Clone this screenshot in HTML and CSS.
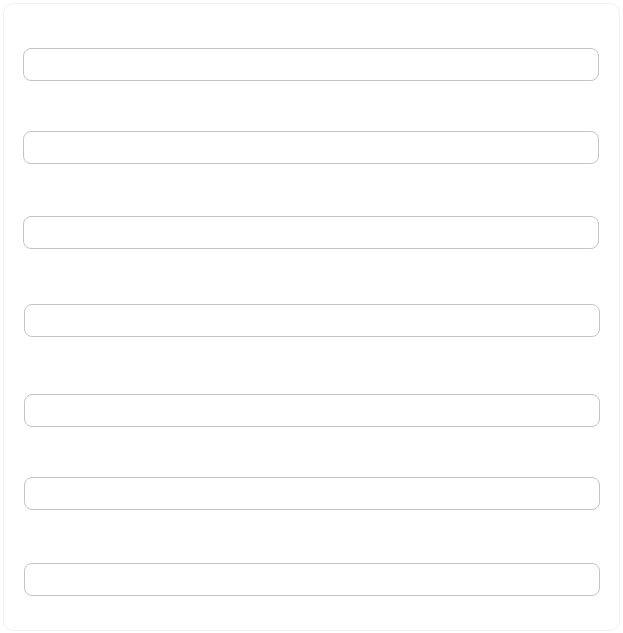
FILE: index.html
```html
<!DOCTYPE html>
<html>
<head>
<meta charset="utf-8">
<link rel="stylesheet" href="styles.css">
</head>
<body>
<div class="card">
  <div class="field f1"><input class="input" type="text"></div>
  <div class="field f2"><input class="input" type="text"></div>
  <div class="field f3"><input class="input" type="text"></div>
  <div class="field f4 shift"><input class="input" type="text"></div>
  <div class="field f5 shift"><input class="input" type="text"></div>
  <div class="field f6 shift"><input class="input" type="text"></div>
  <div class="field f7 shift"><input class="input" type="text"></div>
</div>
</body>
</html>
```
FILE: styles.css
```css
html, body {
  margin: 0;
  padding: 0;
  background: #ffffff;
  font-family: "Liberation Sans", Arial, sans-serif;
}
body {
  padding: 3px 3px 2px 3px;
  width: 623px;
  height: 633px;
  box-sizing: border-box;
}
.card {
  box-sizing: border-box;
  width: 617px;
  height: 628px;
  border: 1px solid #f0f0f0;
  border-radius: 10px;
  background: #fff;
  display: flex;
  flex-direction: column;
  padding: 0 19px 0 19px;
}
.field {
  display: flex;
}
.input {
  box-sizing: border-box;
  width: 576px;
  height: 33px;
  border: 1px solid #c4c4c4;
  border-radius: 8px;
  background: #fff;
  margin: 0;
  padding: 0 10px;
  outline: none;
}
.shift { padding-left: 1px; }
.f1 { margin-top: 44px; }
.f2 { margin-top: 50px; }
.f3 { margin-top: 52px; }
.f4 { margin-top: 55px; }
.f5 { margin-top: 57px; }
.f6 { margin-top: 50px; }
.f7 { margin-top: 53px; }
```
